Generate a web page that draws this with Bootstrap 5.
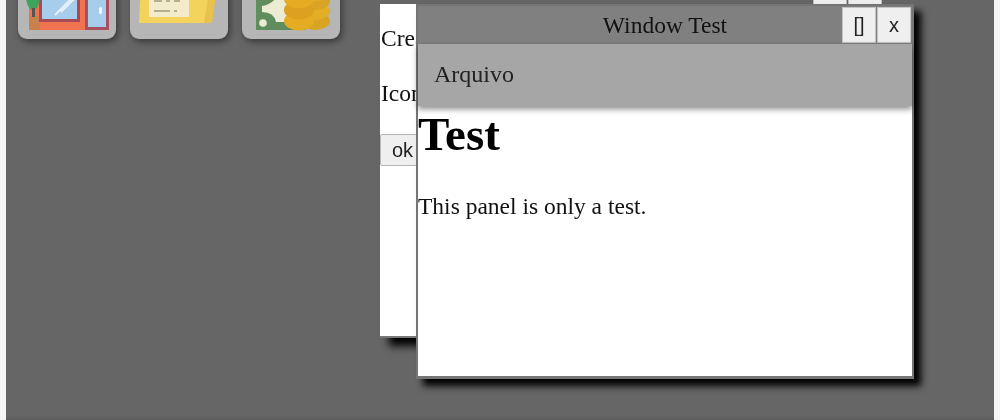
<!DOCTYPE html>
<html lang="pt">
<head>
<meta charset="utf-8">
<title>Window Test</title>
<link href="https://cdn.jsdelivr.net/npm/bootstrap@5.3.0/dist/css/bootstrap.min.css" rel="stylesheet">
<style>
html,body{margin:0;height:420px;overflow:hidden;background:#f5f5f5}
.desk{position:relative;margin:0 6px;height:420px;background:#666;overflow:hidden;box-shadow:inset 0 -3px 3px -2px #555;filter:blur(.35px)}
.dock{padding:0 0 0 12px;margin-top:-40px;gap:14px}
.tile{width:98px;height:79px;background:#b6b6b6;border-radius:9px;box-shadow:2px 3px 7px rgba(0,0,0,.45);overflow:hidden;display:block}
.tile svg{display:block;width:98px;height:79px}
.win{position:absolute;background:#fff;font-family:"Liberation Serif",serif;color:#111}
.back{left:374px;top:4px;width:504px;height:334px;border-bottom:2px solid #777;box-shadow:8px 9px 8px -1px #000;font-size:23.5px;line-height:27px}
.back .tbtns{position:absolute;right:2px;top:-9px;gap:1px}
.back .tbtn-b{width:34px;height:12px;background:#eee;border:1px solid #bbb}
.back p{margin:0;padding-left:1px}
.back .l1{padding-top:21px}
.back .l2{padding-top:28px}
.okbtn{margin-top:27px;display:block;width:60px;height:32px;background:#efefef;border:1px solid #b5b5b5;font:20px/28px "Liberation Sans",sans-serif;text-align:left;padding:0 0 0 11px;color:#222;border-radius:2px}
.front{left:410px;top:4px;width:498px;height:375px;border:2px solid #757575;border-bottom-width:3px;box-shadow:7px 7px 7px 0 #000;resize:both}
.tbar{height:38px;background:#808080;text-align:center;font-size:23.5px;line-height:38px;position:relative;color:#111}
.tbtns-f{position:absolute;right:1px;top:1px;gap:1px;display:flex}
.wbtn{width:34px;height:36px;background:#efefef;border:1px solid #c4c4c4;font:20px/34px "Liberation Sans",sans-serif;padding:0;color:#222;text-align:center}
.mbar{height:62px;background:#a6a6a6;font-size:24px;line-height:60px;padding-left:16px;box-shadow:0 3px 6px rgba(0,0,0,.45);color:#222;position:relative}
.ttl{font-size:47px;font-weight:700;line-height:54px;margin:0;padding-top:1px;color:#000;font-family:"Liberation Serif",serif}
.para{font-size:23.5px;line-height:27px;margin:32px 0 0;color:#111}
.grip{position:absolute;right:1px;bottom:1px;width:6px;height:6px}
</style>
</head>
<body>
<div class="desk">
  <div class="dock d-flex">
    <span class="tile"><svg viewBox="0 0 98 79">
      <rect x="11" y="0" width="88" height="70" fill="#f0704f" style="display:none"/>
      <rect x="11" y="20" width="76" height="50" fill="#ef7350"/>
      <rect x="11" y="56" width="11" height="14" fill="#c8814a"/>
      <rect x="21" y="22" width="41" height="40" fill="#a64a55"/>
      <rect x="24" y="22" width="35" height="37" fill="#a7cdec"/>
      <path d="M37 55l20-20M43 52l14-14" stroke="#e4f0fa" stroke-width="2"/>
      <rect x="61" y="26" width="28" height="46" fill="#a64a55" style="display:none"/>
      <rect x="58" y="22" width="3" height="3" fill="#a64a55" style="display:none"/>
      <rect x="67" y="22" width="24" height="48" fill="#a85060"/>
      <rect x="70" y="22" width="18" height="45" fill="#a7cdec"/>
      <rect x="81" y="47" width="3" height="7" rx="1.5" fill="#f4f8fb"/>
      <ellipse cx="15" cy="36" rx="7" ry="14" fill="#3fa35c" />
      <rect x="14" y="48" width="3" height="9" fill="#555"/>
    </svg></span>
    <span class="tile"><svg viewBox="0 0 98 79">
      <path d="M11 20H88L79 63H9z" fill="#f4d35c" transform="translate(0,0)"/>
      <path d="M81 20H88L82 63H74z" fill="#e9c24c"/>
      <rect x="19" y="20" width="40" height="37" fill="#f3eccc"/>
      <path d="M24 41h8M36 41h4M44 41h6M24 51h16M44 51h3" stroke="#b8ae8a" stroke-width="2"/>
    </svg></span>
    <span class="tile"><svg viewBox="0 0 98 79">
      <rect x="14" y="20" width="50" height="50" fill="#5f8d5d"/>
      <path d="M20 46 Q32 44 36 34 L62 44V62H34Q32 52 20 52z" fill="#ecebd3"/>
      <circle cx="21" cy="63" r="3.8" fill="#ecebd3"/>
      <ellipse cx="73" cy="61" rx="15" ry="9" fill="#d9a423"/>
      <ellipse cx="73" cy="51" rx="15" ry="9" fill="#e3ae26"/>
      <ellipse cx="73" cy="41" rx="15" ry="9" fill="#d9a423"/>
      <ellipse cx="73" cy="32" rx="15" ry="9" fill="#e3ae26"/>
      <ellipse cx="57" cy="61" rx="15" ry="9.5" fill="#e5ab22"/>
      <ellipse cx="57" cy="50" rx="15" ry="9.5" fill="#dda020"/>
      <ellipse cx="57" cy="39" rx="15" ry="9.5" fill="#e5ab22"/>
      <ellipse cx="57" cy="28" rx="15" ry="9.5" fill="#fcc02d"/>
    </svg></span>
  </div>

  <div class="win back">
    <div class="tbtns d-flex justify-content-end"><span class="tbtn-b"></span><span class="tbtn-b"></span></div>
    <p class="l1">Create</p>
    <p class="l2">Icon</p>
    <button class="okbtn" type="button">ok</button>
  </div>

  <div class="win front">
    <div class="tbar">Window Test
      <div class="tbtns-f"><button class="wbtn" type="button">[]</button><button class="wbtn" type="button">x</button></div>
    </div>
    <div class="mbar">Arquivo</div>
    <h1 class="ttl">Test</h1>
    <p class="para">This panel is only a test.</p>
  </div>
</div>
</body>
</html>
